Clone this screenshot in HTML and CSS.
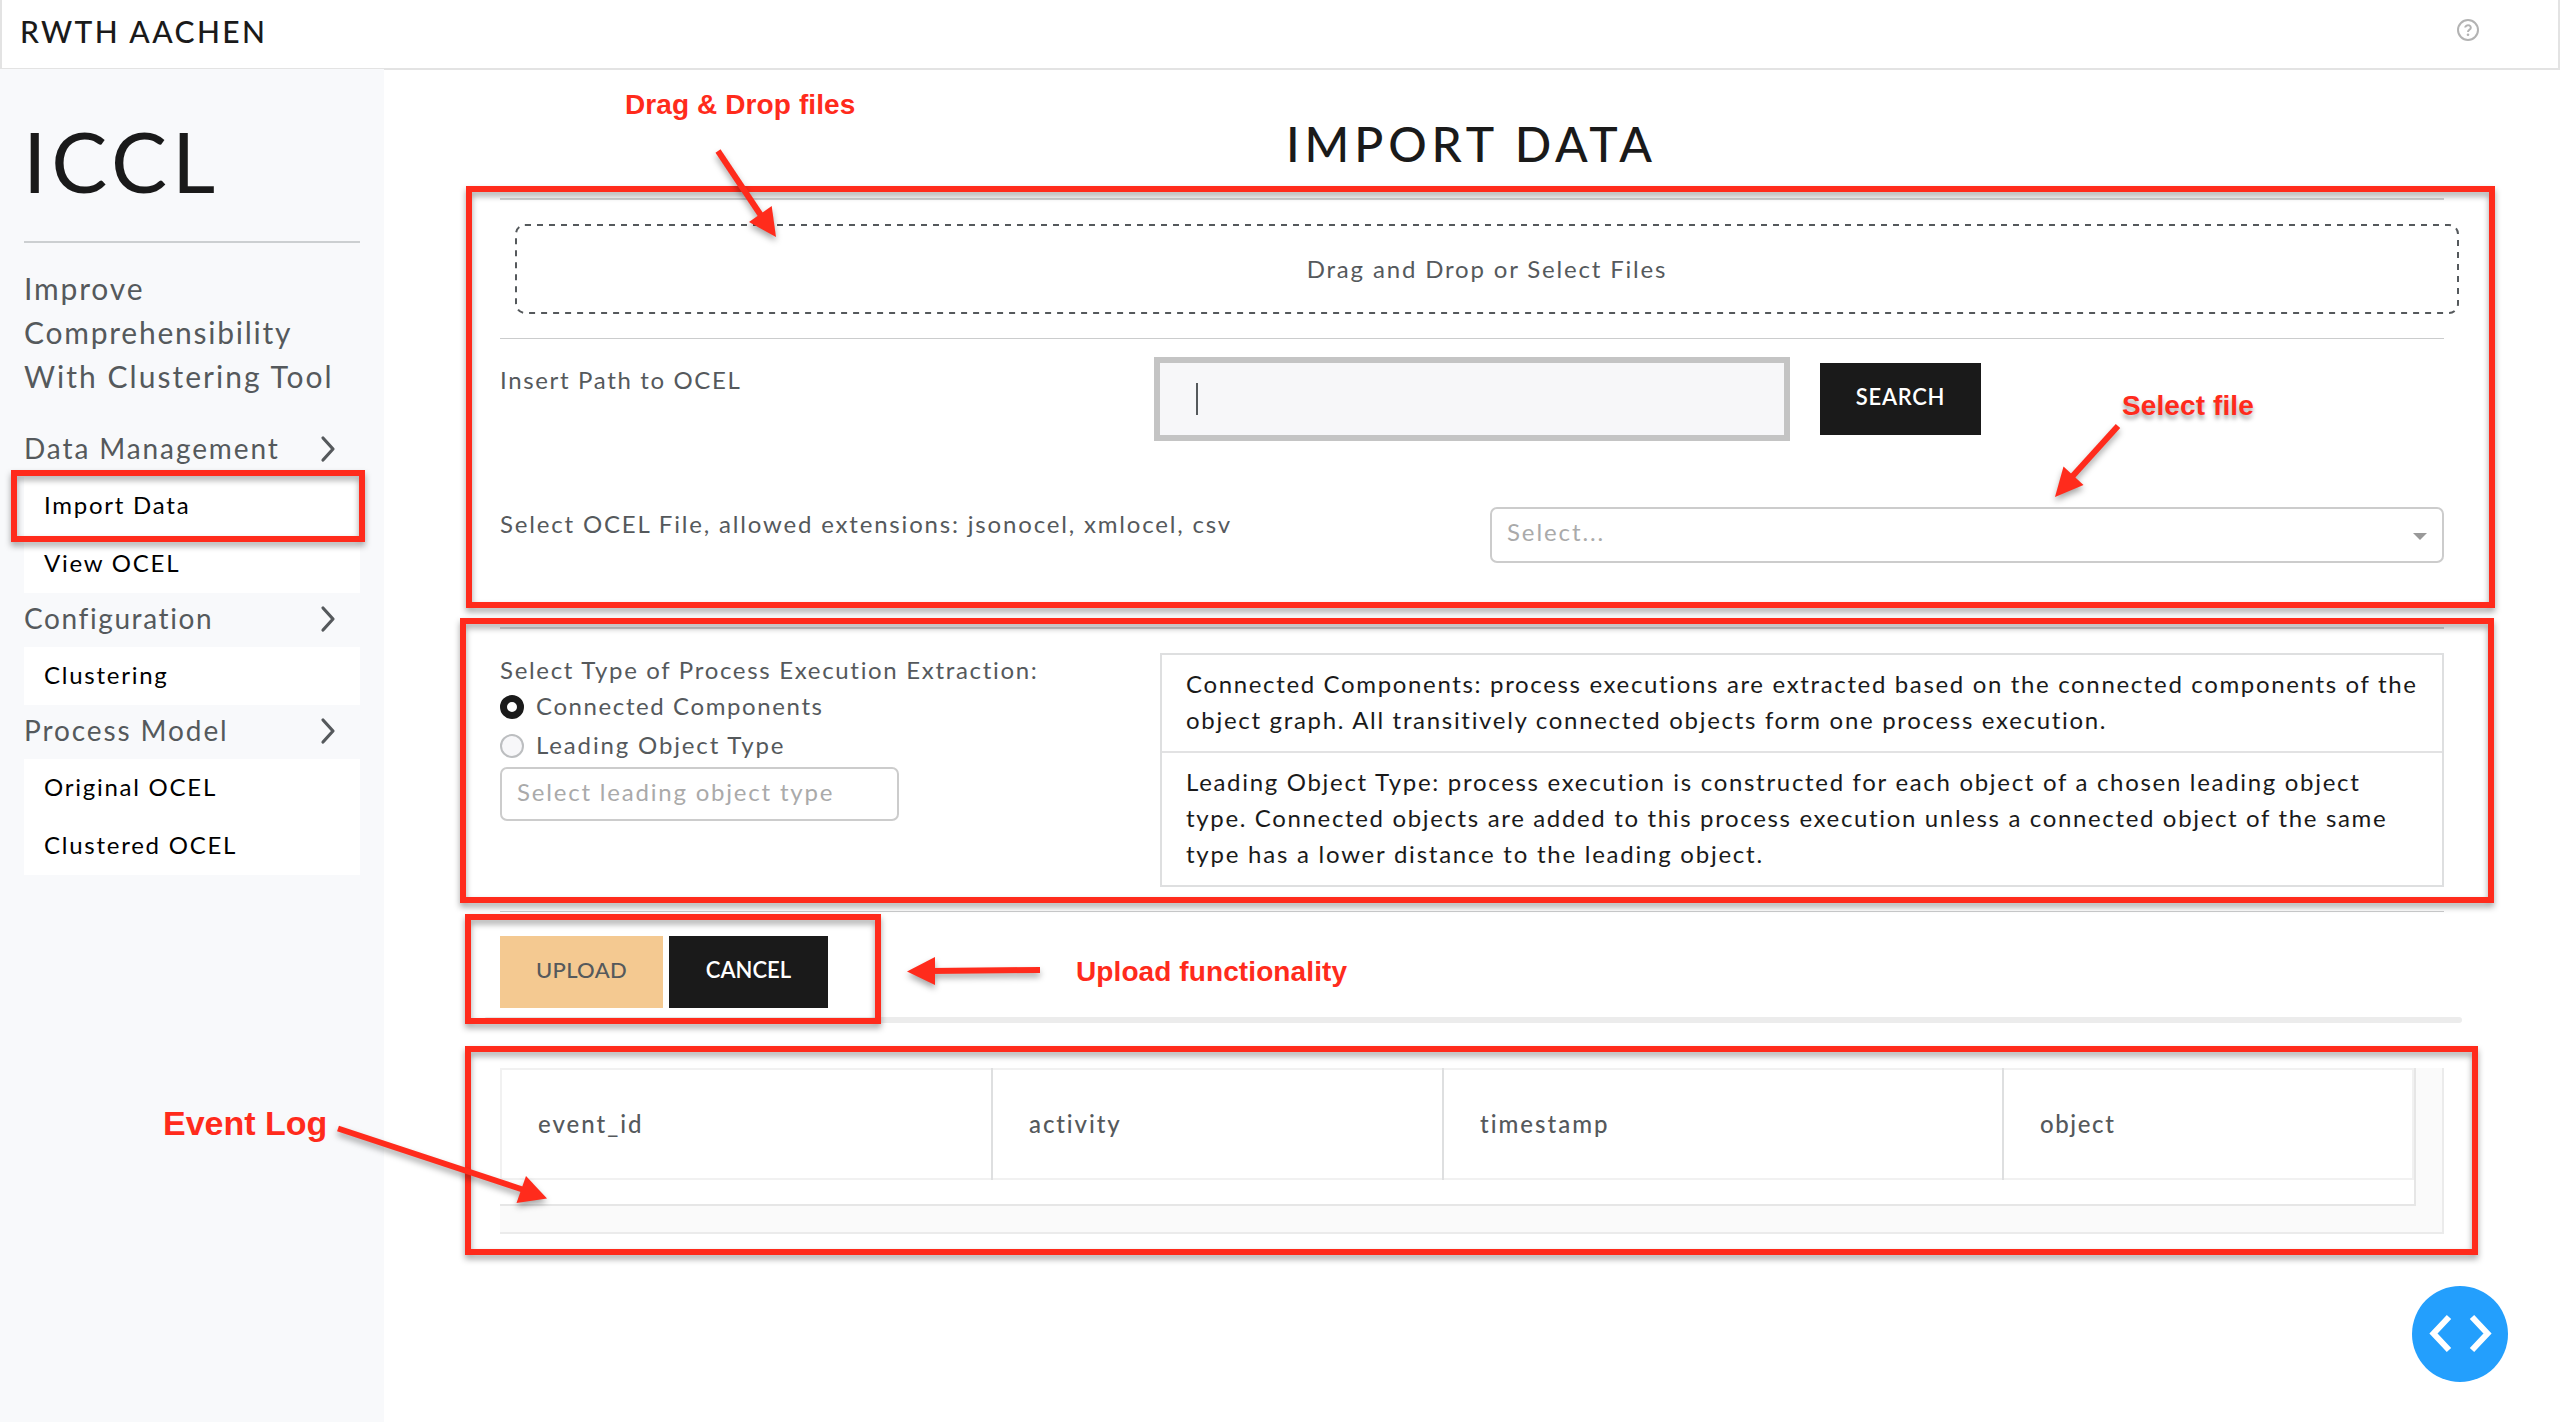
FILE: index.html
```html
<!DOCTYPE html>
<html lang="en">
<head>
<meta charset="utf-8">
<title>ICCL - Import Data</title>
<link rel="stylesheet" href="styles.css">
</head>
<body>
<header class="topbar">
  <span class="brand">RWTH AACHEN</span>
  <svg class="help" width="24" height="24" viewBox="0 0 24 24" fill="none" stroke="#b3b3b3" stroke-width="2">
    <circle cx="12" cy="12" r="10"/>
    <path d="M9.2 9.6a2.8 2.4 0 1 1 4.3 2c-1 .6-1.5 1-1.5 2.3"/>
    <circle cx="12" cy="16.8" r="1.3" fill="#b3b3b3" stroke="none"/>
  </svg>
</header>

<div class="layout">
  <aside class="sidebar">
    <h1 class="logo">ICCL</h1>
    <hr class="side-rule">
    <p class="tagline"><span class="first">Improve</span><br>Comprehensibility<br><span class="wide">With Clustering Tool</span></p>
    <nav class="nav">
      <div class="group">Data Management
        <svg class="chevron" width="18" height="28" viewBox="0 0 18 28"><path d="M4 3l10 11L4 25"/></svg>
      </div>
      <div class="items"><a>Import Data</a><a>View OCEL</a></div>
      <div class="group configuration">Configuration
        <svg class="chevron" width="18" height="28" viewBox="0 0 18 28"><path d="M4 3l10 11L4 25"/></svg>
      </div>
      <div class="items"><a>Clustering</a></div>
      <div class="group">Process Model
        <svg class="chevron" width="18" height="28" viewBox="0 0 18 28"><path d="M4 3l10 11L4 25"/></svg>
      </div>
      <div class="items"><a>Original OCEL</a><a>Clustered OCEL</a></div>
    </nav>
  </aside>

  <main class="content">
    <h2 class="title">IMPORT DATA</h2>
    <hr class="rule">
    <div class="dropzone">
      <svg class="dashes" width="1944" height="90"><rect x="1" y="1" width="1942" height="88" rx="9"/></svg>
      Drag and Drop or Select Files
    </div>
    <hr class="rule thin">

    <div class="row path-row">
      <label class="label path-label">Insert Path to OCEL</label>
      <div class="path-input"><span class="caret"></span></div>
      <button class="btn search">SEARCH</button>
    </div>
    <div class="row file-row">
      <label class="label file-label">Select OCEL File, allowed extensions: jsonocel, xmlocel, csv</label>
      <div class="select">Select...<span class="arrow-down"></span></div>
    </div>

    <hr class="rule section-rule">
    <div class="row extraction">
      <div class="options">
        <div class="label type-label">Select Type of Process Execution Extraction:</div>
        <div class="radio-row"><span class="radio on"></span>Connected Components</div>
        <div class="radio-row second"><span class="radio"></span>Leading Object Type</div>
        <div class="select leading">Select leading object type</div>
      </div>
      <div class="notes">
        <p class="note">Connected Components: process executions are extracted based on the connected components of the<br><span class="loose">object graph. All transitively connected objects form one process execution.</span></p>
        <p class="note"><span class="loose">Leading Object Type: process execution is constructed for each object of a chosen leading object</span><br>type. Connected objects are added to this process execution unless a connected object of the same<br><span class="looser">type has a lower distance to the leading object.</span></p>
      </div>
    </div>

    <hr class="rule thin">
    <div class="actions">
      <button class="btn upload">UPLOAD</button>
      <button class="btn cancel">CANCEL</button>
    </div>
    <div class="progress"></div>

    <div class="table-wrap">
      <div class="table">
        <div class="thead">
          <div class="th c1">event_id</div>
          <div class="th c2">activity</div>
          <div class="th c3">timestamp</div>
          <div class="th c4">object</div>
        </div>
      </div>
    </div>
  </main>
</div>

<button class="fab" aria-label="Debug menu">
  <svg width="96" height="96" viewBox="0 0 96 96" fill="none" stroke="#fff" stroke-width="6"><path d="M37 31L21.500 47.500 37 64M60 31l15.500 16.500L60 64"/></svg>
</button>

<div class="mark mark-nav"></div>
<div class="mark mark-source"></div>
<div class="mark mark-extraction"></div>
<div class="mark mark-actions"></div>
<div class="mark mark-log"></div>
<svg class="arrows" width="2560" height="1422" viewBox="0 0 2560 1422">
  <g><path class="shaft" d="M718 151L764 220"/><path d="M776 237L771.700 206 749 222z"/></g>
  <g><path class="shaft" d="M2118 426L2070 479"/><path d="M2055 497L2063.500 466.500 2083.500 485z"/></g>
  <g><path class="shaft" d="M1040 970L930 971"/><path d="M907 971.500L935 957 935 985z"/></g>
  <g><path class="shaft" d="M338 1128.500L524 1190"/><path d="M547 1198.500L526 1176 516.500 1203z"/></g>
</svg>
<div class="callout c-drag">Drag &amp; Drop files</div>
<div class="callout c-select">Select file</div>
<div class="callout c-upload">Upload functionality</div>
<div class="callout c-log">Event Log</div>
</body>
</html>
```
FILE: styles.css
```css
* { box-sizing: border-box; }
body {
  margin: 0;
  width: 2560px;
  height: 1422px;
  position: relative;
  overflow: hidden;
  background: #fff;
  color: #55595c;
  font: 400 24px/36px "Lato", "Open Sans", sans-serif;
  letter-spacing: 1.7px;
  white-space: nowrap;
  font-variant-ligatures: none;
}
h1, h2, p { margin: 0; font-weight: 400; }
hr { border: 0; margin: 0; }
button { border: 0; padding: 0; margin: 0; font: inherit; }

/* Top bar */
.topbar {
  height: 70px;
  border: 2px solid #e3e3e3;
  border-top: 0;
  padding: 13px 78px 0 18px;
  display: flex;
  justify-content: space-between;
}
.brand { font-size: 30px; font-weight: 500; letter-spacing: 2.44px; color: #1a1a1a; }
.help { margin-top: 5px; }

/* Sidebar */
.layout { display: flex; height: 1352px; }
.sidebar {
  width: 384px;
  height: 1353px;
  margin-top: -1px;
  flex: none;
  padding: 42px 24px 0;
  background: #f8f9fb;
}
.logo { font-size: 84px; line-height: 100px; letter-spacing: 4.8px; text-indent: -1px; color: #1a1a1a; }
.side-rule { height: 2px; margin-top: 30px; background: #cccfd1; }
.tagline { margin-top: 23px; font-size: 30px; line-height: 44px; letter-spacing: 1.75px; }
.first { letter-spacing: 1.85px; }
.wide { letter-spacing: 2.03px; }
.nav { margin-top: 25px; }
.group {
  display: flex;
  justify-content: space-between;
  height: 54px;
  font-size: 28px;
  line-height: 51px;
  letter-spacing: 1.9px;
}
.configuration { letter-spacing: 1.6px; }
.chevron { margin: 12px 23px 0 0; fill: none; stroke: #55595c; stroke-width: 3.2; stroke-linecap: round; stroke-linejoin: round; }
.items { background: #fff; color: #000; }
.items a { display: block; height: 58px; padding-left: 20px; line-height: 56px; letter-spacing: 1.75px; }

/* Main column */
.content { flex: 1; padding: 41px 116px 0; }
.title {
  font-size: 48px;
  font-weight: 500;
  line-height: 66px;
  letter-spacing: 4.9px;
  text-align: center;
  text-indent: -1px;
  color: #1a1a1a;
}
.rule { height: 2px; margin-top: 21px; background: #d1d2d3; }
.rule.thin { height: 1px; margin-top: 24px; background: #cbcccd; }
.rule.section-rule { margin-top: 64px; }
.dropzone {
  position: relative;
  height: 90px;
  margin: 24px -15px 0 15px;
  text-align: center;
  line-height: 90px;
  letter-spacing: 1.83px;
}
.dashes { position: absolute; left: 0; top: 0; fill: none; stroke: #55595c; stroke-width: 2; stroke-dasharray: 6 6; }
.row { display: flex; }
.label { margin-top: -1px; }
.path-row { margin-top: 24px; }
.path-label { width: 660px; letter-spacing: 1.65px; }
.path-input {
  width: 624px;
  height: 72px;
  background: #f7f7f9;
  box-shadow: 0 0 0 6px #c4c4c4;
  padding: 20px 36px;
}
.caret { display: block; width: 2px; height: 32px; background: #55595c; }
.btn {
  height: 72px;
  padding-bottom: 4px;
  background: #1a1a1a;
  color: #fff;
  font-size: 22px;
  font-weight: 600;
  text-align: center;
}
.search { width: 161px; margin-left: 36px; letter-spacing: 0.7px; }
.file-row { margin-top: 72px; }
.file-label { width: 990px; letter-spacing: 1.82px; }
.select {
  display: flex;
  justify-content: space-between;
  width: 954px;
  height: 56px;
  border: 2px solid #ccc;
  border-radius: 7px;
  padding: 0 15px;
  line-height: 46px;
  letter-spacing: 1.9px;
  color: #aaa;
}
.arrow-down {
  border: 7px solid transparent;
  border-top-color: #999;
  border-bottom: 0;
  height: 7px;
  margin-top: 24px;
  align-self: flex-start;
}

/* Extraction section */
.extraction { margin-top: 24px; }
.options { width: 660px; }
.type-label { letter-spacing: 1.68px; }
.radio-row { display: flex; align-items: flex-start; gap: 12px; letter-spacing: 1.6px; }
.radio-row.second { margin-top: 3px; letter-spacing: 1.85px; }
.radio { width: 24px; height: 24px; margin-top: 7px; border: 2px solid #bcbec0; border-radius: 50%; background: #f7f7f9; }
.radio.on { border: 7px solid #1a1a1a; background: #fff; }
.leading { width: 399px; height: 54px; margin-top: 4px; letter-spacing: 1.8px; }
.notes { width: 1284px; border: 2px solid #dedfe0; color: #1a1a1a; }
.note { padding: 11px 0 13px 24px; letter-spacing: 1.65px; }
.note + .note { border-top: 2px solid #e2e2e3; }
.loose { letter-spacing: 1.69px; }
.looser { letter-spacing: 1.76px; }

/* Actions */
.actions { display: flex; gap: 6px; margin-top: 24px; }
.upload { width: 163px; background: #f4c991; color: #55595c; font-weight: 500; letter-spacing: 0.3px; }
.cancel { width: 159px; letter-spacing: 0; }
.progress { height: 6px; margin: 9px -18px 0 -16px; border-radius: 3px; background: #ececec; }

/* Event log table */
.table-wrap {
  height: 166px;
  margin-top: 45px;
  border: solid #ebebeb;
  border-width: 0 2px 2px 0;
  background: #fafafa;
}
.table {
  width: 1916px;
  height: 138px;
  border: solid #e6e6e6;
  border-width: 0 2px 2px 0;
  background: #fff;
}
.thead { display: flex; height: 112px; border: 2px solid #f1f1f1; }
.th { line-height: 107px; padding-left: 36px; font-weight: 500; letter-spacing: 2px; }
.c1 { width: 491px; }
.c2 { width: 451px; letter-spacing: 1.9px; }
.c3 { width: 560px; }
.c4 { flex: 1; letter-spacing: 1.6px; }
.c1, .c2, .c3 { height: 112px; margin-top: -2px; padding-top: 2px; border-right: 2px solid #dedfe0; }

/* Floating button */
.fab { position: absolute; left: 2412px; top: 1286px; width: 96px; height: 96px; border-radius: 50%; background: #239ffd; }
.fab svg { display: block; }

/* Annotation overlay */
.mark { position: absolute; border: 6px solid #ff2b1c; filter: drop-shadow(0 4px 3px rgba(0, 0, 0, .35)); }
.mark-nav { left: 11px; top: 470px; width: 354px; height: 72px; }
.mark-source { left: 466px; top: 186px; width: 2029px; height: 422px; }
.mark-extraction { left: 460px; top: 618px; width: 2034px; height: 285px; }
.mark-actions { left: 465px; top: 914px; width: 416px; height: 110px; }
.mark-log { left: 465px; top: 1046px; width: 2013px; height: 209px; }
.arrows { position: absolute; left: 0; top: 0; fill: #ff2b1c; }
.arrows g { filter: drop-shadow(0 4px 3px rgba(0, 0, 0, .35)); }
.shaft { fill: none; stroke: #ff2b1c; stroke-width: 6; }
.callout {
  position: absolute;
  font: 700 28px/32px "Liberation Sans", Arial, sans-serif;
  letter-spacing: 0.1px;
  color: #ff2b1c;
}
.c-drag { left: 625px; top: 89px; }
.c-select { left: 2122px; top: 390px; letter-spacing: 0.1px; text-shadow: 0 4px 4px rgba(0, 0, 0, .35); }
.c-upload { left: 1076px; top: 956px; }
.c-log { left: 163px; top: 1103px; font-size: 34px; line-height: 40px; letter-spacing: 0; }
```
